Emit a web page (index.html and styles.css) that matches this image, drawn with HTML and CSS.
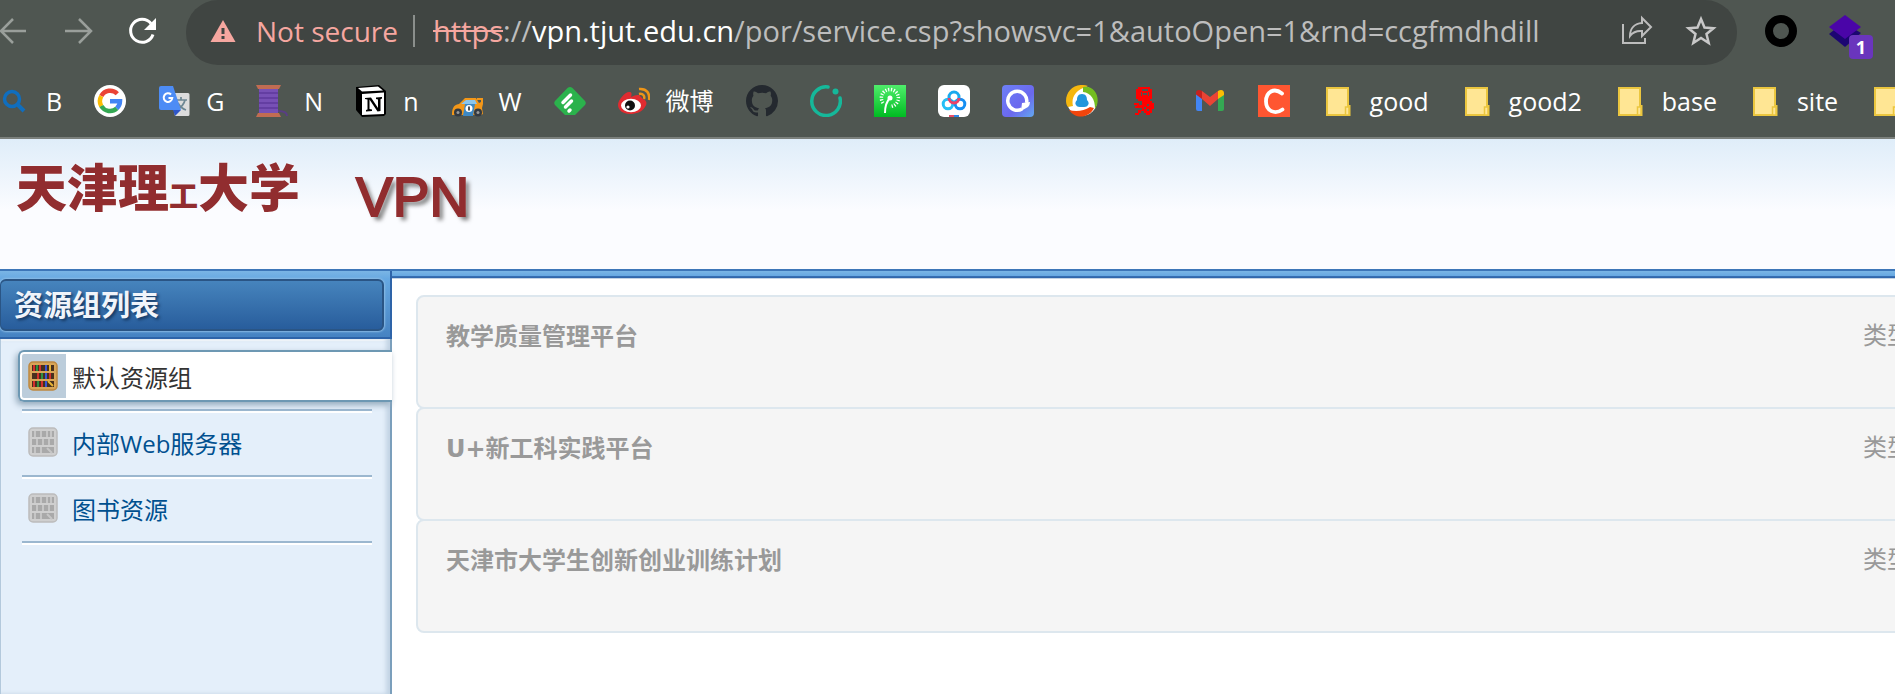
FILE: index.html
```html
<!DOCTYPE html>
<html lang="zh-CN">
<head>
<meta charset="utf-8">
<title>天津理工大学 VPN</title>
<link rel="stylesheet" href="styles.css">
</head>
<body>
<svg class="defs" aria-hidden="true">
  <symbol id="folder" viewBox="0 0 32 32"><path d="M5 3h21v18h1.500v9H5z" fill="#ffe694" stroke="#ebc63f" stroke-width="2"/><path d="M23.500 30v-8h3.500v8z" fill="#ffe694" stroke="#ebc63f" stroke-width="1.500"/></symbol>
  <symbol id="shelf" viewBox="0 0 30 30"><rect x="1" y="1" width="28" height="28" rx="4" fill="#d8a558" stroke="#bd8840" stroke-width="1.500"/><g fill="#47301e"><path d="M4 4h22v6H4zM4 12h22v6H4zM4 20h22v6H4z"/></g><g stroke-width="2"><path d="M6 4v6M12 4v6M10 12v6M22 12v6M6 20v6M14 20v6" stroke="#d32f2c"/><path d="M9 4v6M14 12v6M10 20v6" stroke="#2f9140"/><path d="M18 4v6M18 12v6M18 20v6" stroke="#3a55d2"/><path d="M22 4v6M20 20l5 5" stroke="#e7b333"/></g></symbol>
  <symbol id="shelf-off" viewBox="0 0 30 30"><rect x="1" y="1" width="28" height="28" rx="4" fill="#cfcfcf" stroke="#bcbcbc" stroke-width="1.500"/><g fill="#a9a9a9"><path d="M4 4h22v6H4zM4 12h22v6H4zM4 20h22v6H4z"/></g><path d="M7 4v6M13 4v6M19 4v6M23 4v6M9 12v6M15 12v6M21 12v6M7 20v6M13 20v6M19 21l5 5" stroke="#c6c6c6" stroke-width="2"/></symbol>
</svg>

<header class="chrome">
  <div class="toolbar">
    <button class="tool back" aria-label="Back"><svg viewBox="0 0 32 32"><path d="M28 16H4M15 4L3 16l12 12" fill="none" stroke="#9a9f9b" stroke-width="2.500"/></svg></button>
    <button class="tool" aria-label="Forward"><svg viewBox="0 0 32 32"><path d="M3 16h25M17 4l12 12-12 12" fill="none" stroke="#9a9f9b" stroke-width="2.500"/></svg></button>
    <button class="tool reload" aria-label="Reload"><svg viewBox="0 0 32 32"><path d="M27 19.500A11.500 11.500 0 1 1 25 8.500" fill="none" stroke="#fff" stroke-width="3"/><path d="M30 3v12H18z" fill="#fff"/></svg></button>
    <div class="omnibox">
      <svg class="warn" viewBox="0 0 26 24"><path d="M13 1l12.500 22H.500z" fill="#f6a7a0"/><path d="M13 9v6M13 17v3" stroke="#404542" stroke-width="3"/></svg>
      <span class="insecure">Not secure</span>
      <span class="divider"></span>
      <div class="url"><s>https</s>://<b>vpn.tjut.edu.cn</b>/por/service.csp?showsvc=1&amp;autoOpen=1&amp;rnd=ccgfmdhdill</div>
      <button class="tool" aria-label="Share"><svg viewBox="0 0 32 32"><path d="M2 9v19h22v-5" fill="none" stroke="#bdbdbd" stroke-width="2"/><path d="M21 3l9 9-9 9v-5c-6-.500-9 1-12 5C9 13 14 8.500 21 8z" fill="none" stroke="#bdbdbd" stroke-width="2"/></svg></button>
      <button class="tool" aria-label="Bookmark this page"><svg viewBox="0 0 32 32"><path d="M16 4l3.500 8.500 9 .700-7 5.800 2.200 9L16 23l-7.700 5 2.200-9-7-5.800 9-.700z" fill="none" stroke="#c8c8c8" stroke-width="2.500"/></svg></button>
    </div>
    <button class="tool" aria-label="Recorder"><svg viewBox="0 0 32 32"><circle cx="16" cy="16" r="12" fill="none" stroke="#000" stroke-width="8"/></svg></button>
    <button class="tool layers" aria-label="Layers extension"><svg viewBox="0 0 32 32"><path d="M0 19l5-4h22l5 3-16 14z" fill="#1c0672"/><path d="M16 0l16 12-16 12L0 12z" fill="#4a05a8"/></svg><span class="badge">1</span></button>
  </div>

  <nav class="bookmarks" aria-label="Bookmarks">
    <a href="#"><svg viewBox="0 0 32 32"><circle cx="14" cy="14" r="7.500" fill="none" stroke="#106ebe" stroke-width="3.500"/><path d="M19 19l7 7" stroke="#106ebe" stroke-width="4"/></svg><span>B</span></a>
    <a href="#" aria-label="Google"><svg viewBox="0 0 32 32"><circle cx="16" cy="16" r="16" fill="#fff"/><g fill="none" stroke-width="4.500"><path d="M23.300 8.700A10 10 0 0 0 7.300 11" stroke="#ea4335"/><path d="M7.300 11a10 10 0 0 0 0 10" stroke="#fbbc05"/><path d="M7.300 21a10 10 0 0 0 15.500 2.400" stroke="#34a853"/><path d="M22.800 23.400A10 10 0 0 0 26 16.300H16" stroke="#4285f4"/></g></svg></a>
    <a href="#"><svg viewBox="0 0 32 32"><path d="M12 8h18a1.500 1.500 0 0 1 1.500 1.500v20A1.500 1.500 0 0 1 30 31H17z" fill="#dcdcdc"/><path d="M18 15h11M23 12v3M27 15c-1 5-5 8-8 10M20 18c2 4 5 6 8 7" stroke="#6d8793" stroke-width="1.700" fill="none"/><path d="M15 25h8l-6 6z" fill="#2d55c8"/><path d="M3 1h12l8 24H3a2 2 0 0 1-2-2V3a2 2 0 0 1 2-2z" fill="#4d8cf5"/><path d="M13 9.500a4.300 4.300 0 1 0 1.300 3.500H10.500" fill="none" stroke="#fff" stroke-width="2"/></svg><span>G</span></a>
    <a href="#"><svg viewBox="0 0 32 32"><path d="M22 26c5 0 9 1 9 5" fill="none" stroke="#5a3d86" stroke-width="2"/><path d="M3 3h19v25H3z" fill="#7750b5"/><path d="M3 8h19M3 13h19M3 18h19M3 23h19" stroke="#5f389c" stroke-width="1.500"/><path d="M0 0h25l-2 4H2zM0 32h25l-2-4H2z" fill="#c16c52"/></svg><span>N</span></a>
    <a href="#"><svg viewBox="0 0 32 32"><path d="M1 2l23-2 7 6v23l-2 2-22 1-6-7z" fill="#000"/><path d="M3 3l20-1.500 5 4-21 1z" fill="#fff"/><path d="M7 9l22-1.500V29L7 30z" fill="#fff"/><path d="M10 13l6-.500 7 10.500V14.500l-2-.500v-1.500l6-.500V13.500l-1.500.800V26l-3 .500-8-12v9.500l2.500.500V26l-6 .500V25l1.500-.500V14.500L10 14z" fill="#000"/></svg><span>n</span></a>
    <a href="#"><svg viewBox="0 0 32 32"><path d="M1 30c0-6 1-10 7-11l6-6h11l3 5 2-1v-2l-4 0v-2h6v6l-1 4 1 6-2 1z" fill="#f39718"/><path d="M10 19l5-4h9l2 4z" fill="#8bc6ed"/><path d="M14 19h10l-2 12H12z" fill="#3c88c4"/><circle cx="18" cy="23.500" r="3.500" fill="#fff"/><path d="M18 21.500v4" stroke="#333" stroke-width="1.700"/><g fill="#343a41"><circle cx="7" cy="27.500" r="4"/><circle cx="27" cy="27.500" r="4"/></g><g fill="#999"><circle cx="7" cy="27.500" r="1.500"/><circle cx="27" cy="27.500" r="1.500"/></g></svg><span>W</span></a>
    <a href="#" aria-label="Feedly"><svg viewBox="0 0 32 32"><path d="M13.500 3q2.500-2 5 0L31 16q1.500 2 0 4L21 30H11L1 20q-1.500-2 0-4z" fill="#2bb24c"/><path d="M9 17.500l7.500-7.500M11.500 22l6-6M15 26l1-1" stroke="#fff" stroke-width="3.500" stroke-linecap="round"/></svg></a>
    <a href="#"><svg viewBox="0 0 32 32"><path d="M25 14c3 1 5 4 2 8-3 5-9 7-15 7C5 29 0 25 0 20 0 15 7 7 11 7c3 0 3 2 2 5 4-2 8-3 9-1z" fill="#e02b30"/><ellipse cx="13" cy="20.500" rx="10" ry="6.800" fill="#fff"/><circle cx="12" cy="20.500" r="5" fill="#111"/><circle cx="10" cy="22" r="1.600" fill="#fff"/><path d="M21 9c4-1 6 2 5 5M21 4c8-1 11 5 10 11" fill="none" stroke="#ee9517" stroke-width="2.500"/></svg><span class="han">微博</span></a>
    <a href="#" aria-label="GitHub"><svg viewBox="0 0 16 16"><path fill="#24292f" d="M8 0C3.580 0 0 3.580 0 8c0 3.540 2.290 6.530 5.470 7.590.4.070.55-.17.55-.38 0-.19-.01-.82-.01-1.490-2.010.37-2.530-.49-2.690-.94-.09-.23-.48-.94-.82-1.130-.28-.15-.68-.52-.01-.53.63-.01 1.080.58 1.230.82.72 1.210 1.870.87 2.330.66.07-.52.28-.87.51-1.070-1.780-.2-3.640-.89-3.640-3.950 0-.87.31-1.590.82-2.150-.08-.2-.36-1.020.08-2.120 0 0 .67-.21 2.200.82a7.600 7.600 0 0 1 4 0c1.530-1.040 2.200-.82 2.200-.82.44 1.100.16 1.920.08 2.120.51.56.82 1.270.82 2.150 0 3.070-1.870 3.750-3.650 3.950.29.25.54.73.54 1.480 0 1.070-.01 1.930-.01 2.200 0 .21.15.46.55.38A8.010 8.010 0 0 0 16 8c0-4.420-3.580-8-8-8z"/></svg></a>
    <a href="#" aria-label="Orbit"><svg viewBox="0 0 32 32"><path d="M18 2A14.300 14.300 0 1 0 30 13" fill="none" stroke="#15b89a" stroke-width="3.500" stroke-linecap="round"/><circle cx="25.500" cy="6.500" r="3" fill="#15b89a"/></svg></a>
    <a href="#" aria-label="Dandelion"><svg viewBox="0 0 32 32"><defs><linearGradient id="g1" x2="0" y2="1"><stop stop-color="#4fee6b"/><stop offset="1" stop-color="#00bb22"/></linearGradient></defs><path d="M0 0h32v32H0z" fill="url(#g1)"/><path d="M9 18a8.500 8.500 0 1 1 7 3.500" fill="none" stroke="#fff" stroke-width="3.500" stroke-dasharray="1.200 1.600"/><circle cx="16" cy="13" r="2.500" fill="#fff"/><path d="M16 13c-4 4-5 9-5 15" fill="none" stroke="#fff" stroke-width="2"/></svg></a>
    <a href="#" aria-label="Cloud drive"><svg viewBox="0 0 32 32"><rect width="32" height="32" rx="6" fill="#fff"/><g fill="none" stroke-width="3"><circle cx="10" cy="19" r="4.800" stroke="#26bff5"/><circle cx="22" cy="19" r="4.800" stroke="#168ff2"/><circle cx="16" cy="12" r="5" stroke="#19a9ee"/><path d="M11 13a5 5 0 0 0 10 0" stroke="#ec4268"/></g><path d="M11 30h5v2h-5z" fill="#e94d69"/><path d="M16 30h5v2h-5z" fill="#2b87e8"/></svg></a>
    <a href="#" aria-label="Quark"><svg viewBox="0 0 32 32"><defs><linearGradient id="g2" x2="1" y2="1"><stop stop-color="#6d80f8"/><stop offset=".6" stop-color="#6b68ee"/><stop offset="1" stop-color="#63a9f0"/></linearGradient></defs><rect width="32" height="32" rx="4" fill="url(#g2)"/><path d="M24.500 18A9.500 9.500 0 1 0 20 24" fill="none" stroke="#fff" stroke-width="3.500"/><path d="M20 18l8-1q0 3-2 5l-7 4z" fill="#fff"/></svg></a>
    <a href="#" aria-label="QQ mail"><svg viewBox="0 0 32 32"><circle cx="16" cy="16" r="15" fill="#fff"/><path d="M22 1C10-3 0 5 0 16c0 3 1 5 2 6l5-1C5 13 9 5 22 1z" fill="#f5b70f"/><path d="M17 2c10-2 17 8 14 18l-2 4C29 14 25 8 17 7z" fill="#74bd20"/><path d="M3 25c7 2 15 1 21-3l4 1c-5 10-18 12-25 2z" fill="#f1450d"/><path d="M16 9c4 0 5 3 5 6 2 2 2 4 1 5-1 2-3 2-6 2s-5 0-6-2c-1-1-1-3 1-5 0-3 1-6 5-6z" fill="#2296dc"/></svg></a>
    <a href="#" aria-label="Octopus"><svg viewBox="0 0 32 32" shape-rendering="crispEdges"><path d="M8 2h12v2h2v10h-2v2h-4v2h-4v-2H8v-2H6V4h2z" fill="#f00"/><path d="M12 4h6v2h-6zM11 7h1v4h-1zM13 8h4v2h-4zM18 7h1v4h-1z" fill="#505651"/><path d="M4 18h5v2h3v-2h4v-2h6v2h2v6h-2v4h-2v2h-4v-2h-2v-2h-3v2H9v2H5v-2h3v-3h4v-2H5v-2h2v-1H4z" fill="#f00"/><path d="M17 19h2v2h-2zM14 22h2v2h-2zM17 24h2v2h-2z" fill="#505651"/></svg></a>
    <a href="#" aria-label="Gmail"><svg viewBox="0 0 32 32"><path d="M2 8l6 4v14H4a2 2 0 0 1-2-2z" fill="#4285f4"/><path d="M24 12l6-4v16a2 2 0 0 1-2 2h-4z" fill="#34a853"/><path d="M2 8c0-3 3-4 6-2v8l-6-4.500z" fill="#c5221f"/><path d="M24 6c3-2 6-1 6 2v2l-6 4z" fill="#fbbc04"/><path d="M8 6l8 6 8-6v8l-8 7-8-7z" fill="#ea4335"/></svg></a>
    <a href="#" aria-label="C"><svg viewBox="0 0 32 32"><path d="M0 0h32v32H0z" fill="#ff5631"/><path d="M24 8.500C16 2 8 7 8 16.500S17 30 24.500 24.500" fill="none" stroke="#fff" stroke-width="3.800" stroke-linecap="round"/></svg></a>
    <a href="#"><svg><use href="#folder"/></svg><span>good</span></a>
    <a href="#"><svg><use href="#folder"/></svg><span>good2</span></a>
    <a href="#"><svg><use href="#folder"/></svg><span>base</span></a>
    <a href="#"><svg><use href="#folder"/></svg><span>site</span></a>
    <a href="#" aria-label="More bookmarks"><svg><use href="#folder"/></svg></a>
  </nav>
</header>

<div class="banner">
  <h1 class="school">天津理<small>工</small>大学</h1>
  <span class="product">VPN</span>
</div>

<div class="portal">
  <aside class="sidebar">
    <div class="group-head"><h2>资源组列表</h2></div>
    <ul class="groups">
      <li><a class="group current" href="#"><svg><use href="#shelf"/></svg><span>默认资源组</span></a></li>
      <li><a class="group" href="#"><svg><use href="#shelf-off"/></svg><span>内部Web服务器</span></a></li>
      <li><a class="group" href="#"><svg><use href="#shelf-off"/></svg><span>图书资源</span></a></li>
    </ul>
  </aside>
  <main class="resources">
    <article class="card"><h3>教学质量管理平台</h3><span>类型</span></article>
    <article class="card"><h3>U+新工科实践平台</h3><span>类型</span></article>
    <article class="card"><h3>天津市大学生创新创业训练计划</h3><span>类型</span></article>
  </main>
</div>
</body>
</html>
```
FILE: styles.css
```css
* { box-sizing: border-box; }

body {
  margin: 0;
  min-height: 100vh;
  display: flex;
  flex-direction: column;
  overflow: hidden;
  background: #fff;
  font-family: "Open Sans", "Noto Sans CJK SC", sans-serif;
}

h1, h2, h3, ul { margin: 0; padding: 0; }
ul { list-style: none; }
a { color: inherit; text-decoration: none; }
button { border: 0; padding: 0; background: none; font: inherit; }
.defs { display: none; }

/* Browser frame */
.chrome {
  background: #4f5651;
  border-bottom: 2px solid #7b807c;
  color: #fff;
}

.toolbar {
  display: flex;
  align-items: center;
  height: 65px;
  padding-right: 34px;
}

.tool {
  position: relative;
  flex: none;
  width: 32px;
  height: 32px;
  margin-right: 32px;
}
.tool svg { display: block; width: 32px; height: 32px; }
.toolbar > .tool { margin-bottom: 4px; }
.back { margin-left: -2px; }
.reload { margin-right: 28px; }

.omnibox {
  flex: 1;
  min-width: 0;
  display: flex;
  align-items: center;
  height: 65px;
  margin-right: 28px;
  padding: 0 20px 4px 24px;
  border-radius: 32px;
  background: #404542;
  font-size: 29px;
  line-height: 36px;
  white-space: nowrap;
}
.omnibox .tool:last-child { margin-right: 0; }
.warn { flex: none; width: 26px; height: 24px; margin-right: 20px; }
.insecure { color: #f6a7a0; font-size: 28px; }
.divider { width: 2px; height: 32px; margin: 0 18px 0 15px; background: #8b8f8c; }
.url { flex: 1; color: #bdbdbd; }
.url s { color: #f6a7a0; }
.url b { color: #fff; font-weight: 400; }

.toolbar > .layers { margin-right: 0; }
.badge {
  position: absolute;
  left: 20px;
  top: 20px;
  width: 24px;
  height: 24px;
  border-radius: 4px;
  background: #6a35bd;
  color: #fff;
  font-size: 18px;
  font-weight: 700;
  line-height: 24px;
  text-align: center;
}

.bookmarks {
  display: flex;
  align-items: center;
  gap: 32px;
  height: 72px;
  margin-left: -2px;
  font-size: 25px;
  line-height: 32px;
  white-space: nowrap;
}
.bookmarks a { flex: none; display: flex; align-items: center; gap: 16px; }
.bookmarks svg { flex: none; display: block; width: 32px; height: 32px; }
.bookmarks .han { font-size: 24px; }

/* School banner */
.banner {
  display: flex;
  align-items: flex-start;
  height: 130px;
  padding: 12px 16px;
  gap: 56px;
  background: linear-gradient(#dfedf9, #fbfcff 55%);
  color: #912d2f;
}
.school {
  font-size: 51px;
  font-weight: 900;
  line-height: 72px;
  text-shadow: 0 0 2px #fff;
}
.school small { font-size: 29px; }
.product {
  padding-top: 16px;
  font-family: "Liberation Sans", Arial, sans-serif;
  font-size: 55px;
  line-height: 60px;
  text-shadow: 0 0 2px #fff, 4px 4px 4px #777;
  -webkit-text-stroke: 2px #912d2f;
}

/* Portal */
.portal {
  flex: 1;
  display: flex;
  border-top: 2px solid #3d76b8;
}

.sidebar {
  flex: none;
  display: flex;
  flex-direction: column;
  width: 392px;
}
.group-head {
  height: 68px;
  padding: 8px 6px 7px 0;
  border-right: 2px solid #2e64a9;
  border-bottom: 2px solid #2e64a9;
  background: linear-gradient(#7ab5e5, #66a8e2 8px, #4683c2);
}
.group-head h2 {
  height: 52px;
  padding-left: 13px;
  border: 2px solid #2a5585;
  border-left-width: 1px;
  border-radius: 6px;
  background: linear-gradient(#4684bd, #285d9c);
  box-shadow: 0 0 2px 1px #8bbbe4;
  color: #f0f4fa;
  font-size: 29px;
  line-height: 48px;
  text-shadow: 2px 2px 3px #163861;
}

.groups {
  flex: 1;
  padding: 6px 0;
  border-left: 1px solid #b3c9dc;
  border-right: 2px solid #7b9fbc;
  background: #e4effa;
  box-shadow: inset -4px 0 4px #c3d4e4, inset 0 2px 1px #fff;
}
.groups li {
  height: 66px;
  margin: 0 18px 0 21px;
  border-bottom: 2px solid #9bb7cf;
  box-shadow: 0 2px #fff;
}
.group {
  display: flex;
  align-items: center;
  gap: 14px;
  height: 62px;
  padding-left: 6px;
  color: #00508f;
  font-size: 24px;
  line-height: 32px;
}
.group svg { flex: none; width: 30px; height: 30px; }
.group span { padding-top: 4px; }
.current {
  position: relative;
  top: 5px;
  height: 52px;
  margin: 0 -20px 0 -4px;
  padding-left: 8px;
  border: 2px solid #6d98b3;
  border-right: 0;
  border-radius: 6px 0 0 6px;
  background: linear-gradient(90deg, #bccddb 46px, #fff 46px);
  box-shadow: inset 0 0 0 2px #fff, -2px 3px 6px #93a9bb;
  color: #333;
}

.resources {
  flex: 1;
  min-width: 0;
  margin-right: -48px;
  padding: 24px 0 16px 24px;
  background: linear-gradient(#7ab5e5, #66a8e2 5px, #3a72b5 5px, #2e64a9 7px, #c5d3e3 7px) top / 100% 8px no-repeat;
}
.card {
  display: flex;
  justify-content: space-between;
  height: 114px;
  margin-bottom: -2px;
  padding: 22px 30px 22px 28px;
  border: 2px solid #dde7ee;
  border-radius: 8px;
  background: #f5f5f5;
  color: #999;
  font-size: 24px;
  line-height: 32px;
}
.card h3 {
  padding-top: 2px;
  font-family: "DejaVu Sans", "Noto Sans CJK SC", sans-serif;
  font-size: 24px;
}
```
